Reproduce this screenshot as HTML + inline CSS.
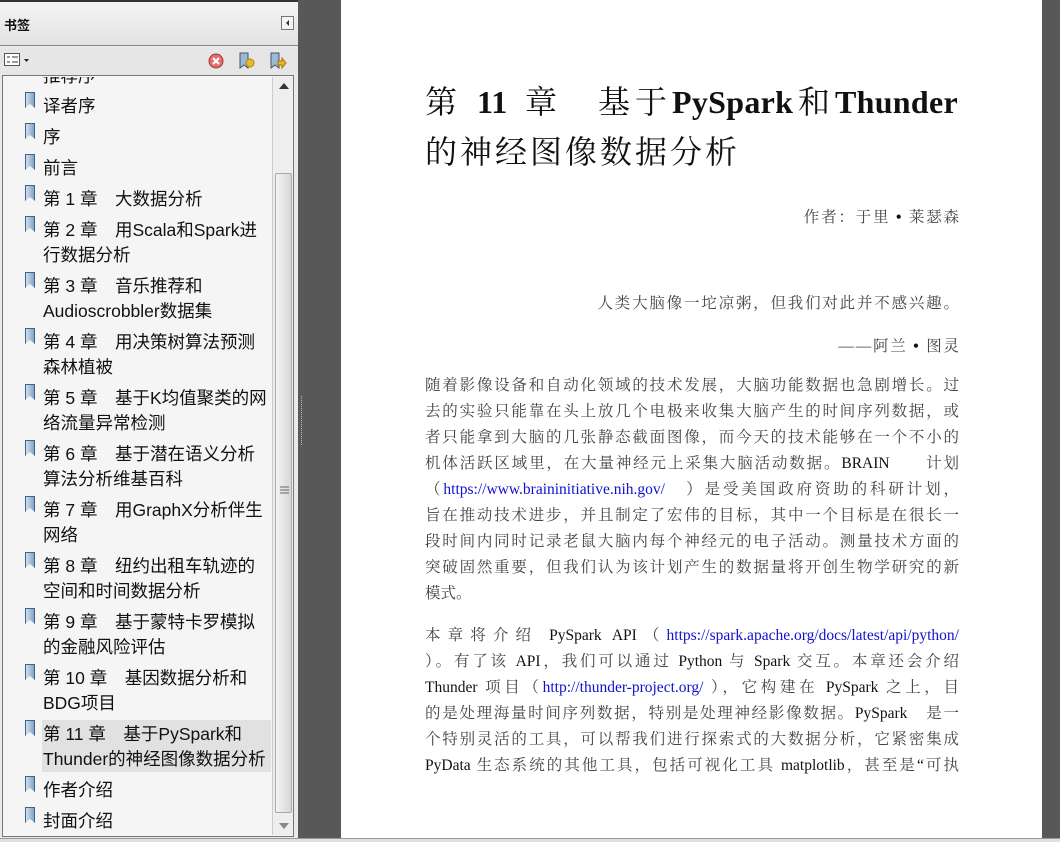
<!DOCTYPE html>
<html><head><meta charset="utf-8"><style>
*{margin:0;padding:0;box-sizing:border-box}
body{width:1060px;height:842px;overflow:hidden;background:#585858;position:relative;font-family:"Liberation Sans","Noto Sans CJK SC",sans-serif}
#side{position:absolute;left:0;top:0;width:298px;height:842px;background:#e9e9e9;border-top:2px solid #333}
#hdr{position:absolute;left:0;top:0;width:298px;height:44px;background:linear-gradient(#f4f4f4,#e2e2e2);border-bottom:1px solid #888}
#hdr span{position:absolute;left:4px;top:13px;font-size:13px;font-weight:bold;color:#111;font-family:"Noto Sans CJK SC",sans-serif}
#col{position:absolute;left:281px;top:14px;width:13px;height:14px;border:1px solid #777;background:#f4f4f4}
#col:after{content:"";position:absolute;left:4px;top:3px;border-right:3px solid #333;border-top:3px solid transparent;border-bottom:3px solid transparent}
#tb{position:absolute;left:0;top:45px;width:298px;height:28px;background:#e6e6e6}
#list{position:absolute;left:2px;top:73px;width:292px;height:762px;background:#f5f5f5;border:1px solid #777;overflow:hidden}
#sb{position:absolute;left:272px;top:75px;width:21px;height:758px;background:#eee;border-left:1px solid #ccc}
#thumb{position:absolute;left:2px;top:96px;width:17px;height:640px;background:linear-gradient(90deg,#f4f4f4,#d6d6d6);border:1px solid #aaa;border-radius:2px}
.it{position:absolute;left:43px;font-size:17.5px;color:#111;line-height:25px;font-family:"Liberation Sans","Noto Sans CJK SC",sans-serif;white-space:nowrap}
.ic{position:absolute;left:25px;width:10px;height:16px;background:linear-gradient(90deg,#cfe0f0,#7fa5c9);border:1px solid #45617e;clip-path:polygon(0 0,100% 0,100% 100%,50% 75%,0 100%)}
#page{position:absolute;left:341px;top:0;width:701px;height:838px;background:#fff}
#bot{position:absolute;left:0;top:838px;width:1060px;height:4px;background:#e0e0e0;border-top:1px solid #999}
.t{position:absolute;left:425px;font-family:"Liberation Serif","Noto Serif CJK SC",serif;color:#111;white-space:nowrap}
.h{top:82px;font-size:32px;line-height:40px}
.r{left:auto;right:101px;font-size:15.5px;color:#444;letter-spacing:1.8px;margin-right:-1.8px}
.ln{position:absolute;left:425px;width:534px;font-size:15.5px;line-height:20px;color:#444;font-family:"Liberation Serif","Noto Serif CJK SC",serif;text-align:justify;text-align-last:justify;white-space:nowrap}
.ln b{font-weight:normal;color:#111}
.ln a{color:#1010d0;text-decoration:none}
</style></head><body>
<div id="side">
<div id="hdr"><span>书签</span><div id="col"></div></div>
<div id="tb">
<svg style="position:absolute;left:4px;top:6px" width="26" height="14"><rect x="0.5" y="0.5" width="15" height="12" fill="#fff" stroke="#555"/><path d="M3 4h3M3 9h3M8 4h6M8 9h6" stroke="#333"/><path d="M20 6h5l-2.5 3z" fill="#222"/></svg>
<svg style="position:absolute;left:208px;top:6px" width="16" height="16"><circle cx="8" cy="8" r="7" fill="#e07070" stroke="#a33"/><path d="M5 5l6 6M11 5l-6 6" stroke="#fff" stroke-width="2"/></svg>
<svg style="position:absolute;left:238px;top:5px" width="18" height="18"><path d="M2 1h8v15l-4-3-4 3z" fill="#9bb9d6" stroke="#456"/><circle cx="12" cy="11" r="4" fill="#e8b830" stroke="#a80"/></svg>
<svg style="position:absolute;left:269px;top:5px" width="18" height="18"><path d="M2 1h8v15l-4-3-4 3z" fill="#9bb9d6" stroke="#456"/><path d="M9 9h4v-3l4 5-4 5v-3H9z" fill="#f0b030" stroke="#a70"/></svg>
</div>
<div id="list"></div>
<div id="sb"><svg style="position:absolute;left:6px;top:6px" width="10" height="6"><path d="M0 6L5 0l5 6z" fill="#333"/></svg><div id="thumb"><svg style="position:absolute;left:4px;top:312px" width="9" height="10"><path d="M0 1h9M0 4h9M0 7h9" stroke="#666"/></svg></div><svg style="position:absolute;left:6px;top:746px" width="10" height="6"><path d="M0 0L5 6l5-6z" fill="#888"/></svg></div>
<div style="position:absolute;left:42px;top:718px;width:229px;height:52px;background:#e1e1e1"></div>
<div class="it" style="top:62px;clip-path:inset(13px 0 0 0)">推荐序</div>
<div class="ic" style="top:90px"></div><div class="it" style="top:92px">译者序</div>
<div class="ic" style="top:121px"></div><div class="it" style="top:123px">序</div>
<div class="ic" style="top:152px"></div><div class="it" style="top:154px">前言</div>
<div class="ic" style="top:183px"></div><div class="it" style="top:185px">第 1 章　大数据分析</div>
<div class="ic" style="top:214px"></div><div class="it" style="top:216px">第 2 章　用Scala和Spark进<br>行数据分析</div>
<div class="ic" style="top:270px"></div><div class="it" style="top:272px">第 3 章　音乐推荐和<br>Audioscrobbler数据集</div>
<div class="ic" style="top:326px"></div><div class="it" style="top:328px">第 4 章　用决策树算法预测<br>森林植被</div>
<div class="ic" style="top:382px"></div><div class="it" style="top:384px">第 5 章　基于K均值聚类的网<br>络流量异常检测</div>
<div class="ic" style="top:438px"></div><div class="it" style="top:440px">第 6 章　基于潜在语义分析<br>算法分析维基百科</div>
<div class="ic" style="top:494px"></div><div class="it" style="top:496px">第 7 章　用GraphX分析伴生<br>网络</div>
<div class="ic" style="top:550px"></div><div class="it" style="top:552px">第 8 章　纽约出租车轨迹的<br>空间和时间数据分析</div>
<div class="ic" style="top:606px"></div><div class="it" style="top:608px">第 9 章　基于蒙特卡罗模拟<br>的金融风险评估</div>
<div class="ic" style="top:662px"></div><div class="it" style="top:664px">第 10 章　基因数据分析和<br>BDG项目</div>
<div class="ic" style="top:718px"></div><div class="it" style="top:720px">第 11 章　基于PySpark和<br>Thunder的神经图像数据分析</div>
<div class="ic" style="top:774px"></div><div class="it" style="top:776px">作者介绍</div>
<div class="ic" style="top:805px"></div><div class="it" style="top:807px">封面介绍</div>
</div>
<svg style="position:absolute;left:300px;top:396px" width="4" height="50"><path d="M1.5 0v50" stroke="#bbb" stroke-dasharray="1 1"/></svg>
<div id="page"></div>
<div class="t h">第</div>
<div class="t h" style="left:477px;font-weight:bold">11</div>
<div class="t h" style="left:525px">章</div>
<div class="t h" style="left:598px;width:360px;text-align:justify;text-align-last:justify;letter-spacing:0.3px">基于<b>PySpark</b>和<b>Thunder</b></div>
<div class="t" style="top:132px;font-size:32px;line-height:40px;letter-spacing:3px">的神经图像数据分析</div>
<div class="t r" style="top:205px">作者：于里 <b style="color:#111">•</b> 莱瑟森</div>
<div class="t r" style="top:291px">人类大脑像一坨凉粥，但我们对此并不感兴趣。</div>
<div class="t r" style="top:334px">——阿兰 <b style="color:#111">•</b> 图灵</div>
<div class="ln" style="top:376px">随着影像设备和自动化领域的技术发展，大脑功能数据也急剧增长。过</div>
<div class="ln" style="top:402px">去的实验只能靠在头上放几个电极来收集大脑产生的时间序列数据，或</div>
<div class="ln" style="top:428px">者只能拿到大脑的几张静态截面图像，而今天的技术能够在一个不小的</div>
<div class="ln" style="top:454px">机体活跃区域里，在大量神经元上采集大脑活动数据。<b>BRAIN</b>　　计划</div>
<div class="ln" style="top:480px">（<a>https://www.braininitiative.nih.gov/</a>　）是受美国政府资助的科研计划，</div>
<div class="ln" style="top:506px">旨在推动技术进步，并且制定了宏伟的目标，其中一个目标是在很长一</div>
<div class="ln" style="top:532px">段时间内同时记录老鼠大脑内每个神经元的电子活动。测量技术方面的</div>
<div class="ln" style="top:558px">突破固然重要，但我们认为该计划产生的数据量将开创生物学研究的新</div>
<div class="ln" style="top:584px;text-align-last:left">模式。</div>
<div class="ln" style="top:626px">本章将介绍 <b>PySpark</b> <b>API</b>（<a>https://spark.apache.org/docs/latest/api/python/</a></div>
<div class="ln" style="top:652px">）。有了该 <b>API</b>，我们可以通过 <b>Python</b> 与 <b>Spark</b> 交互。本章还会介绍</div>
<div class="ln" style="top:678px"><b>Thunder</b> 项目（<a>http://thunder-project.org/</a> ），它构建在 <b>PySpark</b> 之上，目</div>
<div class="ln" style="top:704px">的是处理海量时间序列数据，特别是处理神经影像数据。<b>PySpark</b>　是一</div>
<div class="ln" style="top:730px">个特别灵活的工具，可以帮我们进行探索式的大数据分析，它紧密集成</div>
<div class="ln" style="top:756px"><b>PyData</b> 生态系统的其他工具，包括可视化工具 <b>matplotlib</b>，甚至是<b>“</b>可执</div>
<div id="bot"></div>
</body></html>
